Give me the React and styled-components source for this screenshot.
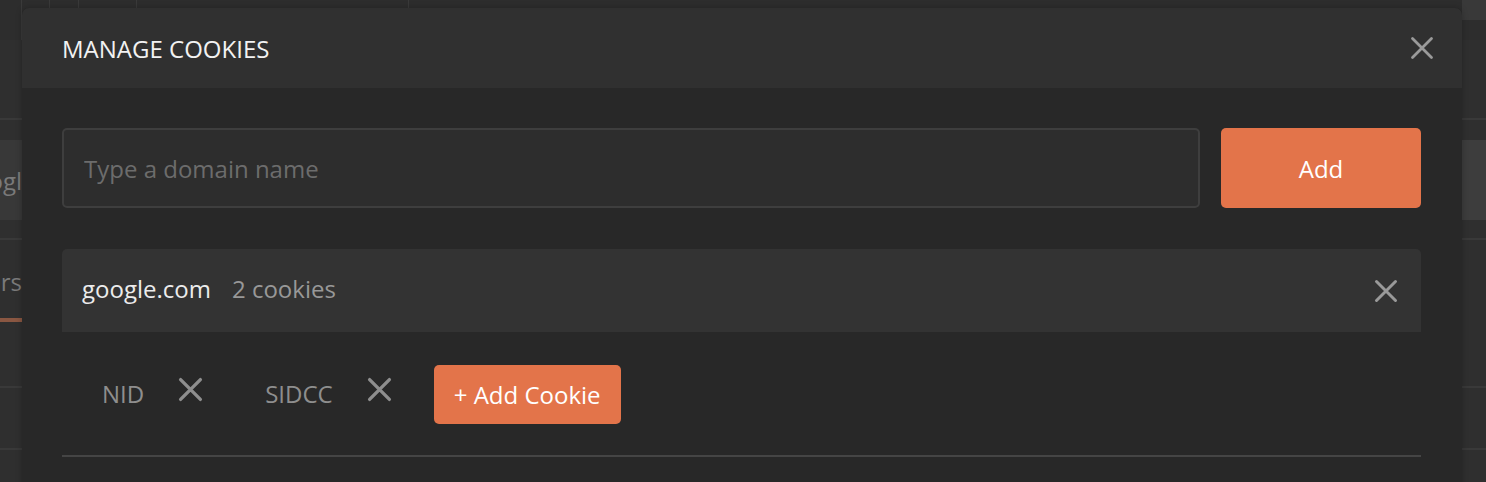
import React from 'react'
import styled, { createGlobalStyle } from 'styled-components'

const Global = createGlobalStyle`
  html, body {
    margin: 0;
    padding: 0;
    background: #2b2b2b;
    overflow: hidden;
  }
  * { box-sizing: border-box; }
`

const Page = styled.div`
  position: relative;
  width: 1486px;
  height: 482px;
  overflow: hidden;
  font-family: "Open Sans", "Noto Sans", sans-serif;
`

/* the app sitting dimmed behind the modal */
const Backdrop = styled.div`
  display: flex;
  flex-direction: column;
  width: 100%;
  height: 100%;
  background: #2f2f2f;
`
const BackRow = styled.div`
  display: flex;
  height: ${p => p.h}px;
  background: ${p => p.bg || '#2f2f2f'};
  border-bottom: ${p => (p.line ? '2px solid #393939' : 'none')};
  flex-shrink: 0;
`
const TopTab = styled.div`
  width: ${p => p.w}px;
  height: 40px;
  border-right: 1px solid #3a3a3a;
`
const Side = styled.div`
  display: flex;
  align-items: center;
  justify-content: ${p => (p.right ? 'flex-end' : 'flex-start')};
  width: ${p => p.w}px;
  height: ${p => p.hh || '100%'};
  background: ${p => p.bg || 'transparent'};
  color: #7a7a7a;
  font-size: 24px;
  overflow: hidden;
  white-space: nowrap;
`
const Fill = styled.div`
  flex: 1;
`
const BackTab = styled.div`
  display: flex;
  align-items: center;
  justify-content: flex-end;
  width: 22px;
  color: #7a7a7a;
  font-size: 24px;
  overflow: hidden;
  white-space: nowrap;
  border-bottom: 4px solid #8a5742;
  padding-top: 4px;
`

const Modal = styled.div`
  position: absolute;
  left: 22px;
  top: 8px;
  width: 1440px;
  bottom: -40px;
  display: flex;
  flex-direction: column;
  background: #282828;
  border-radius: 7px 7px 0 0;
  overflow: hidden;
  box-shadow: 0 0 6px rgba(0, 0, 0, 0.25);
`
const Header = styled.div`
  display: flex;
  align-items: center;
  justify-content: space-between;
  height: 80px;
  padding: 0 28px 0 40px;
  background: #303030;
`
const Title = styled.h1`
  margin: 0;
  font-size: 24px;
  font-weight: 400;
  color: #f2f2f2;
`
const IconButton = styled.button`
  display: flex;
  align-items: center;
  justify-content: center;
  padding: 0;
  margin: ${p => p.m || '0'};
  border: none;
  background: none;
  color: ${p => p.color || '#9a9a9a'};
  cursor: pointer;
`
const Body = styled.div`
  display: flex;
  flex-direction: column;
  padding: 40px 41px 0 40px;
`
const SearchRow = styled.div`
  display: flex;
  gap: 21px;
  height: 80px;
`
const DomainInput = styled.input`
  flex: 1;
  height: 80px;
  padding: 0 20px;
  background: #2d2d2d;
  border: 2px solid #3e3e3e;
  border-radius: 5px;
  color: #e6e6e6;
  font-family: inherit;
  font-size: 24px;
  outline: none;
  &::placeholder { color: #6c6c6c; }
`
const OrangeButton = styled.button`
  width: ${p => p.w || 'auto'};
  height: ${p => p.h}px;
  padding: 0 20px;
  background: #e3744a;
  border: none;
  border-radius: 5px;
  color: #fff;
  font-family: inherit;
  font-size: 24px;
  cursor: pointer;
`
const DomainBlock = styled.div`
  margin-top: 41px;
  display: flex;
  flex-direction: column;
`
const DomainHead = styled.div`
  display: flex;
  align-items: center;
  height: 83px;
  padding: 0 23px 0 20px;
  background: #333333;
  border-radius: 5px 5px 0 0;
`
const DomainName = styled.span`
  color: #ececec;
  font-size: 24px;
  margin-bottom: 5px;
`
const CookieCount = styled.span`
  margin-left: 21px;
  margin-bottom: 5px;
  color: #989898;
  font-size: 24px;
`
const CookieList = styled.div`
  display: flex;
  align-items: center;
  padding: 33px 40px 31px;
  border-bottom: 2px solid #454545;
`
const CookieChip = styled.div`
  display: flex;
  align-items: center;
  margin-right: ${p => p.gap}px;
`
const CookieName = styled.span`
  color: #8e8e8e;
  font-size: 24px;
  margin-right: 34px;
  margin-bottom: 3px;
`

const Cross = ({ size = 24, w = 3 }) => (
  <svg width={size} height={size} viewBox="0 0 24 24" fill="none">
    <path d="M2.5 2.5 L21.5 21.5 M21.5 2.5 L2.5 21.5" stroke="currentColor" strokeWidth={w} strokeLinecap="round" />
  </svg>
)

const cookies = [
  { name: 'NID', gap: 62 },
  { name: 'SIDCC', gap: 42 },
]

export default function App() {
  return (
    <Page>
      <Global />
      <Backdrop>
        <BackRow h={40} bg="#2d2d2d">
          <TopTab w={22} />
          <TopTab w={28} />
          <TopTab w={29} />
          <TopTab w={58} />
          <TopTab w={272} />
          <Fill />
          <Side w={24} hh="20px" bg="#393939" />
        </BackRow>
        <BackRow h={80} line />
        <BackRow h={20} />
        <BackRow h={80}>
          <Side w={22} bg="#383838" right>ogl</Side>
          <Fill />
          <Side w={24} bg="#3d3d3d" />
        </BackRow>
        <BackRow h={20} line />
        <BackRow h={82}>
          <BackTab>ers</BackTab>
          <Fill />
        </BackRow>
        <BackRow h={66} line />
        <BackRow h={62} line />
        <BackRow h={40} />
      </Backdrop>

      <Modal>
        <Header>
          <Title>MANAGE COOKIES</Title>
          <IconButton aria-label="Close"><Cross size={24} w={2.8} /></IconButton>
        </Header>
        <Body>
          <SearchRow>
            <DomainInput placeholder="Type a domain name" />
            <OrangeButton w="200px" h={80}>Add</OrangeButton>
          </SearchRow>
          <DomainBlock>
            <DomainHead>
              <DomainName>google.com</DomainName>
              <CookieCount>2 cookies</CookieCount>
              <Fill />
              <IconButton aria-label="Remove domain"><Cross size={24} w={3} /></IconButton>
            </DomainHead>
            <CookieList>
              {cookies.map(c => (
                <CookieChip key={c.name} gap={c.gap}>
                  <CookieName>{c.name}</CookieName>
                  <IconButton m="0 0 10px 0" color="#8e8e8e" aria-label={`Remove ${c.name}`}>
                    <Cross size={25} w={3.2} />
                  </IconButton>
                </CookieChip>
              ))}
              <OrangeButton h={59}>+ Add Cookie</OrangeButton>
            </CookieList>
          </DomainBlock>
        </Body>
      </Modal>
    </Page>
  )
}
